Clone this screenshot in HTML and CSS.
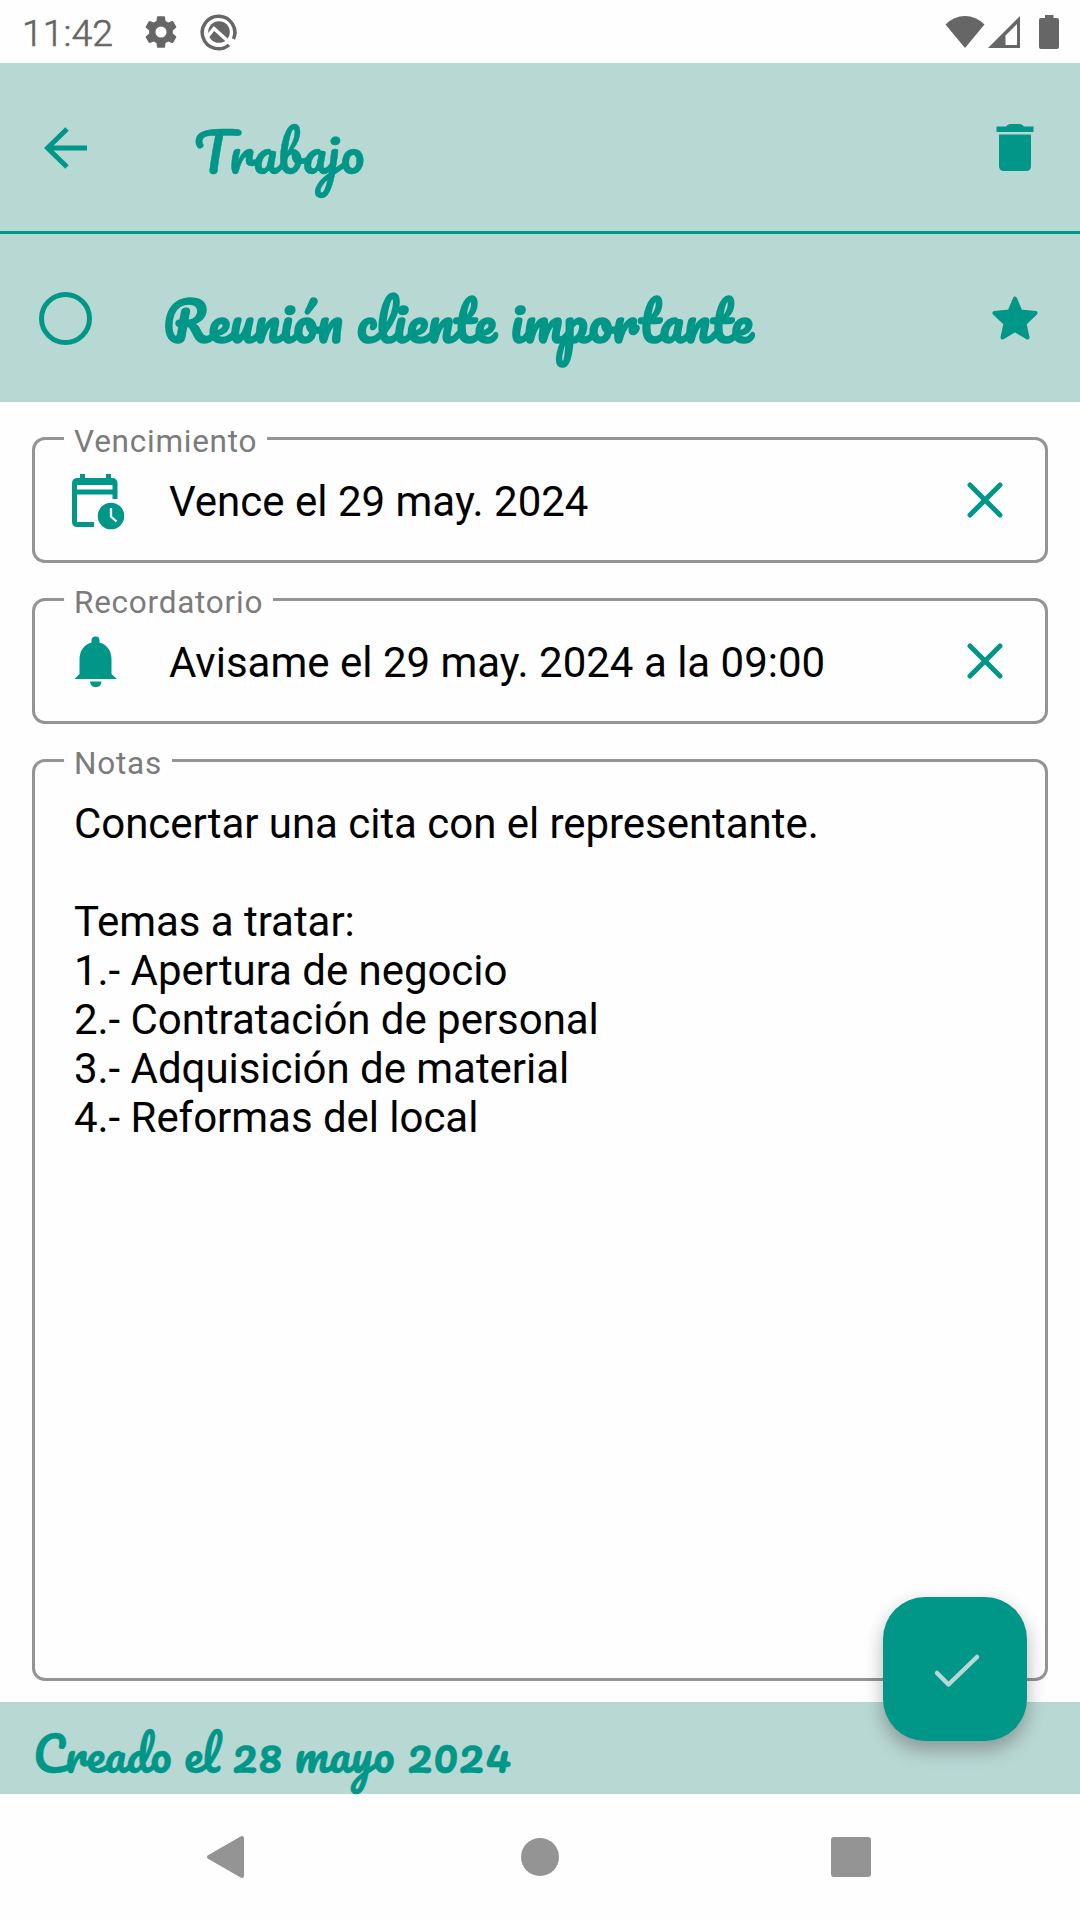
FILE: index.html
```html
<!DOCTYPE html>
<html lang="es">
<head>
<meta charset="utf-8">
<title>Trabajo</title>
<link rel="stylesheet" href="styles.css">
</head>
<body>
<div class="screen">
  <div class="status">
    <span class="clock">11:42</span>
    <svg class="gear" width="38" height="38" viewBox="0 0 24 24"><path d="M19.43 12.98c.04-.32.07-.64.07-.98s-.03-.66-.07-.98l2.11-1.65c.19-.15.24-.42.12-.64l-2-3.46c-.12-.22-.39-.3-.61-.22l-2.49 1c-.52-.4-1.080-.73-1.690-.98l-.38-2.650A.488.488 0 0 0 14 2h-4c-.25 0-.46.18-.49.42l-.38 2.650c-.61.25-1.170.59-1.690.98l-2.490-1c-.23-.09-.49 0-.61.22l-2 3.460c-.13.22-.07.49.12.64l2.110 1.650c-.04.32-.07.65-.07.98s.03.66.07.98l-2.110 1.650c-.19.15-.24.42-.12.64l2 3.460c.12.22.39.3.61.22l2.490-1c.52.4 1.080.73 1.690.98l.38 2.650c.03.24.24.42.49.42h4c.25 0 .46-.18.49-.42l.38-2.650c.61-.25 1.170-.59 1.690-.98l2.490 1c.23.09.49 0 .61-.22l2-3.460c.12-.22.07-.49-.12-.64zM12 15.500a3.500 3.500 0 1 1 0-7 3.500 3.500 0 0 1 0 7z"/></svg>
    <svg class="badge" width="38" height="38" viewBox="0 0 38 38"><path d="M29 32A16.300 16.300 0 1 1 33.500 26" fill="none" stroke="#666" stroke-width="3.500"/><circle cx="19" cy="19" r="10.800"/><path d="M8 23l6-7.500 16 14.500" fill="none" stroke="#fff" stroke-width="3.500"/></svg>
    <span class="spacer"></span>
    <svg class="wifi" width="40" height="34" viewBox="0 0 40 34"><path d="M.5 9.500Q9 1 20 1t19.500 8.500L20 33z"/></svg>
    <svg class="signal" width="34" height="34" viewBox="0 0 34 34"><path fill-rule="evenodd" d="M1 33L33 1v32zM18.500 30H30V9L18.500 20.500z"/></svg>
    <svg class="battery" width="20" height="34" viewBox="0 0 20 34"><path d="M6 0h8.500v3H18a2 2 0 0 1 2 2v27a2 2 0 0 1-2 2H2a2 2 0 0 1-2-2V5a2 2 0 0 1 2-2h4z"/></svg>
  </div>

  <header class="bar">
    <svg class="back" width="43" height="42" viewBox="0 0 43 42"><path d="M23 2L3.500 21 23 40M3.500 21H43" fill="none" stroke="currentColor" stroke-width="5"/></svg>
    <h1 class="script list-name">Trabajo</h1>
    <svg class="trash" width="38" height="48" viewBox="0 0 38 48"><path d="M.5 2.500H10Q12 0 14 0h10q2 0 4 2.500h9.500V8H.5zM3 10.500h32V42q0 5-5 5H8q-5 0-5-5z"/></svg>
  </header>

  <section class="bar title-bar">
    <span class="ring"></span>
    <h2 class="script task-name">Reunión cliente importante</h2>
    <svg class="star" width="46" height="44" viewBox="0 0 46 44"><path d="M23 2.500L28.500 15.500 43.500 17 32.500 27.500 35.500 41.500 23 34 10.500 41.500 13.500 27.500 2.500 17 17.500 15.500z" stroke="currentColor" stroke-width="4" stroke-linejoin="round"/></svg>
  </section>

  <main class="form">
    <fieldset class="field">
      <legend>Vencimiento</legend>
      <div class="row">
        <svg class="lead" width="54" height="56" viewBox="0 0 54 56"><path fill="none" stroke="currentColor" stroke-width="5" d="M24 50.500H7.500q-3 0-3-3v-38q0-3 3-3h34.500q3 0 3 3V25M4.500 18H45"/><path d="M10 0h5v7h-5zM36 0h5v7h-5zM2 9h45v2H2z"/><circle cx="41" cy="42" r="13.300"/><path d="M41 34v8.500l5.500 5" fill="none" stroke="#fff" stroke-width="2.300"/></svg>
        <span class="value">Vence el 29 may. 2024</span>
        <svg class="clear" width="36" height="36" viewBox="0 0 36 36"><path d="M3 3l30 30M33 3L3 33"/></svg>
      </div>
    </fieldset>
    <fieldset class="field">
      <legend>Recordatorio</legend>
      <div class="row">
        <svg class="lead" width="54" height="56" viewBox="0 0 54 56"><path d="M21.500 7.500V5.500a4 4 0 0 1 8 0v2Q41 11 41.500 24V39l5.300 5H4.500l5-5V24Q10 11 21.500 7.500zM20 46.500h11.500q-.5 5.500-5.700 5.500T20 46.500z"/></svg>
        <span class="value">Avisame el 29 may. 2024 a la 09:00</span>
        <svg class="clear" width="36" height="36" viewBox="0 0 36 36"><path d="M3 3l30 30M33 3L3 33"/></svg>
      </div>
    </fieldset>
    <fieldset class="field notes">
      <legend>Notas</legend>
      <div class="text">Concertar una cita con el representante.

Temas a tratar:
1.- Apertura de negocio
2.- Contratación de personal
3.- Adquisición de material
4.- Reformas del local</div>
    </fieldset>
  </main>

  <footer class="created"><span class="script">Creado el 28 mayo 2024</span></footer>

  <nav class="nav">
    <svg width="40" height="44" viewBox="0 0 40 44"><path d="M3 22L36 3v38z" stroke="#949494" stroke-width="4" stroke-linejoin="round"/></svg>
    <svg width="40" height="44" viewBox="0 0 40 44"><circle cx="20" cy="22" r="19"/></svg>
    <svg width="40" height="44" viewBox="0 0 40 44"><rect y="2" width="40" height="40" rx="3"/></svg>
  </nav>

  <button class="fab" aria-label="Guardar"><svg width="48" height="38" viewBox="0 0 48 38"><path d="M4 20l11.500 11.500L44 4" fill="none" stroke="#b8d8d3" stroke-width="4.500" stroke-linecap="round" stroke-linejoin="round"/></svg></button>
</div>
</body>
</html>
```
FILE: styles.css
```css
* { box-sizing: border-box; }
body { margin: 0; background: #fefefe; font-family: Roboto, "Noto Sans", sans-serif; }
svg { display: block; flex: none; fill: currentColor; }
.screen { position: relative; width: 1080px; height: 1920px; display: flex; flex-direction: column; color: #009688; overflow: hidden; }

.status { height: 63px; display: flex; align-items: center; padding: 0 21px 0 22px; color: #666; }
.clock { width: 94px; font-size: 37.5px; font-weight: 300; line-height: 42px; margin-top: 2px; -webkit-text-stroke: 0.6px #666; }
.gear { margin-left: 26px; }
.badge { margin-left: 20px; }
.spacer { flex: 1; }
.signal { margin-left: 2px; }
.battery { margin-left: 18px; }

.bar { height: 168px; background: #b8d8d3; display: flex; align-items: center; padding: 0 46px 0 44px; }
.back { margin-top: 1px; }
.trash { margin-top: 2px; }
.title-bar { height: 171px; border-top: 3px solid #009688; padding: 0 42px 0 39px; }
.script { font-family: Pacifico, cursive; font-weight: 400; margin: 0; white-space: nowrap; }
.list-name { flex: 1; margin-left: 107px; font-size: 52.5px; line-height: 70px; padding-top: 10px; -webkit-text-stroke: 0.5px #009688; }
.task-name { flex: 1; margin-left: 71px; font-size: 53px; font-weight: 700; line-height: 70px; padding-top: 6px; }
.ring { width: 53px; height: 53px; border: 5px solid #009688; border-radius: 50%; }

.form { flex: 1; display: flex; flex-direction: column; gap: 21px; padding: 21px 32px; }
.field { margin: 0; padding: 0; min-width: 0; height: 140px; border: 3px solid #949494; border-radius: 13px; }
.field legend { height: 31px; margin-left: 29px; padding: 6px 10px 0 10px; font-size: 31.5px; line-height: 25px; letter-spacing: 0.75px; color: #7b7b7b; }
.row { display: flex; align-items: flex-start; padding: 20px 42px 0 35px; }
.value { flex: 1; margin-left: 45px; color: #000; font-size: 42px; line-height: 49px; padding-top: 3px; }
.clear { margin-top: 8px; stroke: #009688; stroke-width: 5; stroke-linecap: round; }
.notes { height: 936px; }
.text { padding: 23px 39px; color: #000; font-size: 42px; line-height: 49px; letter-spacing: -0.04px; white-space: pre-line; }

.created { height: 92px; background: #b8d8d3; padding: 20px 33px 0; font-size: 46.7px; line-height: 62px; -webkit-text-stroke: 0.5px #009688; }
.nav { height: 126px; display: flex; justify-content: space-between; align-items: center; padding: 0 209px 0 206px; color: #949494; }
.nav svg:nth-child(2) { margin-left: 2px; }
.fab { position: absolute; left: 883px; top: 1597px; width: 144px; height: 144px; border: 0; border-radius: 42px; background: #009688; display: flex; align-items: center; justify-content: center; padding: 5px 0 0 4px; box-shadow: 0 10px 18px rgba(60, 40, 50, .3), 0 2px 20px rgba(0, 0, 0, .06); }
```
